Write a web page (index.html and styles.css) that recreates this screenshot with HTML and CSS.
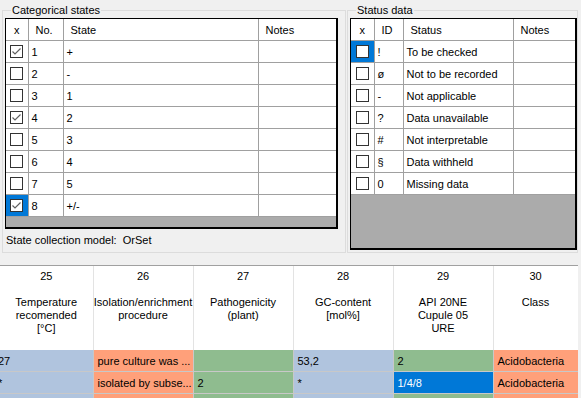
FILE: index.html
```html
<!DOCTYPE html>
<html lang="en">
<head>
    <meta charset="UTF-8">
    <title>Character states</title>
    <link rel="stylesheet" href="styles.css">
</head>
<body>
    <div class="top">
        <fieldset class="group group-left">
            <legend>Categorical states</legend>
            <div class="grid grid-left">
                <table>
                    <colgroup><col class="c-x"><col class="c-no"><col class="c-state"><col></colgroup>
                    <tr class="head"><th class="center">x</th><th>No.</th><th>State</th><th>Notes</th></tr>
                    <tr><td class="box"><span class="cb on"><svg viewBox="0 0 11 11"><path d="M1.5 5.5 L4 8 L9.5 2.5"/></svg></span></td><td>1</td><td>+</td><td></td></tr>
                    <tr><td class="box"><span class="cb"></span></td><td>2</td><td>-</td><td></td></tr>
                    <tr><td class="box"><span class="cb"></span></td><td>3</td><td>1</td><td></td></tr>
                    <tr><td class="box"><span class="cb on"><svg viewBox="0 0 11 11"><path d="M1.5 5.5 L4 8 L9.5 2.5"/></svg></span></td><td>4</td><td>2</td><td></td></tr>
                    <tr><td class="box"><span class="cb"></span></td><td>5</td><td>3</td><td></td></tr>
                    <tr><td class="box"><span class="cb"></span></td><td>6</td><td>4</td><td></td></tr>
                    <tr><td class="box"><span class="cb"></span></td><td>7</td><td>5</td><td></td></tr>
                    <tr><td class="box sel"><span class="cb on"><svg viewBox="0 0 11 11"><path d="M1.5 5.5 L4 8 L9.5 2.5"/></svg></span></td><td>8</td><td>+/-</td><td></td></tr>
                </table>
            </div>
            <div class="model">State collection model:&nbsp; OrSet</div>
        </fieldset>
        <fieldset class="group group-right">
            <legend>Status data</legend>
            <div class="grid grid-right">
                <table>
                    <colgroup><col class="c-x"><col class="c-id"><col class="c-status"><col></colgroup>
                    <tr class="head"><th class="center">x</th><th>ID</th><th>Status</th><th>Notes</th></tr>
                    <tr><td class="box sel"><span class="cb"></span></td><td>!</td><td>To be checked</td><td></td></tr>
                    <tr><td class="box"><span class="cb"></span></td><td>ø</td><td>Not to be recorded</td><td></td></tr>
                    <tr><td class="box"><span class="cb"></span></td><td>-</td><td>Not applicable</td><td></td></tr>
                    <tr><td class="box"><span class="cb"></span></td><td>?</td><td>Data unavailable</td><td></td></tr>
                    <tr><td class="box"><span class="cb"></span></td><td>#</td><td>Not interpretable</td><td></td></tr>
                    <tr><td class="box"><span class="cb"></span></td><td>§</td><td>Data withheld</td><td></td></tr>
                    <tr><td class="box"><span class="cb"></span></td><td>0</td><td>Missing data</td><td></td></tr>
                </table>
            </div>
        </fieldset>
    </div>

    <div class="sheet">
        <table>
            <colgroup><col class="w93"><col class="w100"><col class="w100"><col class="w100"><col class="w100"><col class="w85"></colgroup>
            <tr class="sheet-head">
                <th>25<br><br>Temperature<br>recomended<br>[°C]</th>
                <th><div class="wide">26<br><br>Isolation/enrichment<br>procedure</div></th>
                <th>27<br><br>Pathogenicity<br>(plant)</th>
                <th>28<br><br>GC-content<br>[mol%]</th>
                <th>29<br><br>API 20NE<br>Cupule 05<br>URE</th>
                <th>30<br><br>Class</th>
            </tr>
            <tr>
                <td class="blue cut">27</td>
                <td class="salmon">pure culture was ...</td>
                <td class="green"></td>
                <td class="blue">53,2</td>
                <td class="green">2</td>
                <td class="salmon">Acidobacteria</td>
            </tr>
            <tr>
                <td class="blue cut2">*</td>
                <td class="salmon">isolated by subse...</td>
                <td class="green">2</td>
                <td class="blue">*</td>
                <td class="picked">1/4/8</td>
                <td class="salmon">Acidobacteria</td>
            </tr>
            <tr>
                <td class="blue"></td>
                <td class="salmon"></td>
                <td class="green"></td>
                <td class="blue"></td>
                <td class="green"></td>
                <td class="salmon"></td>
            </tr>
        </table>
    </div>
</body>
</html>
```

FILE: styles.css
```css
body {
    margin: 0;
    background-color: #f0f0f0;
    font-family: "Liberation Sans", Arial, sans-serif;
    font-size: 11px;
    color: #000;
    width: 581px;
    height: 398px;
    overflow: hidden;
}
.top {
    display: flex;
    height: 265px;
    padding-left: 2px;
    box-sizing: border-box;
}
.group {
    margin: 3px 0 0 0;
    padding: 0 0 0 2px;
    border: 1px solid #dcdcdc;
    height: 250px;
    box-sizing: border-box;
}
.group legend {
    padding: 0 1px;
    margin-left: 6px;
    line-height: 14px;
    font-size: 11px;
}
.group-left {
    width: 344px;
}
.group-right {
    width: 231px;
    margin-left: 1px;
}
.grid {
    margin-top: 1px;
    background-color: #ababab;
    border: 1px solid #000;
    border-right-width: 2px;
    border-bottom-width: 2px;
    overflow: hidden;
}
.grid-left {
    width: 330px;
    height: 208px;
}
.grid-right {
    width: 224px;
    height: 229px;
}
.grid table {
    border-collapse: collapse;
    table-layout: fixed;
    width: 100%;
    background-color: #fff;
}
.grid th, .grid td {
    height: 21px;
    padding: 0 0 0 3px;
    border-right: 1px solid #a0a0a0;
    border-bottom: 1px solid #a0a0a0;
    text-align: left;
    font-weight: normal;
    white-space: nowrap;
    overflow: hidden;
}
.grid th {
    padding-left: 7px;
}
.grid th.center {
    padding-left: 0;
    text-align: center;
}
.grid td:last-child, .grid th:last-child {
    border-right: none;
}
.grid-left .c-x { width: 22px; }
.grid-left .c-no { width: 35px; }
.grid-left .c-state { width: 195px; }
.grid-right .c-x { width: 23px; }
.grid-right .c-id { width: 29px; }
.grid-right .c-status { width: 110px; }
.grid td.box {
    padding: 0;
    text-align: center;
}
.grid td.sel {
    background-color: #0078d7;
}
.cb {
    display: inline-block;
    width: 11px;
    height: 11px;
    border: 1px solid #333;
    background-color: #fff;
    vertical-align: middle;
}
.cb svg {
    display: block;
    width: 11px;
    height: 11px;
}
.cb path {
    fill: none;
    stroke: #606060;
    stroke-width: 1.2;
}
.model {
    padding: 5px 0 0 1px;
}
.sheet {
    border-top: 1px solid #a0a0a0;
    width: 578px;
    background-color: #fff;
    overflow: hidden;
}
.sheet table {
    border-collapse: collapse;
    table-layout: fixed;
    width: 578px;
}
.w93 { width: 93px; }
.w100 { width: 100px; }
.w85 { width: 85px; }
.sheet-head th {
    height: 84px;
    padding: 4px 0 0 0;
    box-sizing: border-box;
    vertical-align: top;
    font-weight: normal;
    line-height: 13px;
    border-right: 1px solid #e3e3e3;
    overflow: hidden;
    white-space: nowrap;
}
.sheet-head .wide {
    margin-left: -20px;
    margin-right: -20px;
    text-align: center;
}
.sheet td {
    height: 21px;
    padding: 0 0 0 4px;
    border-right: 1px solid #c8c8c8;
    border-bottom: 1px solid #c8c8c8;
    white-space: nowrap;
    overflow: hidden;
}
.sheet td.cut {
    padding-left: 0;
    text-indent: -2px;
}
.sheet td.cut2 {
    padding-left: 0;
    text-indent: -2px;
}
.blue { background-color: #b0c4de; }
.salmon { background-color: #ffa07a; }
.green { background-color: #8fbc8f; }
.picked {
    background-color: #0078d7;
    color: #fff;
}
```
